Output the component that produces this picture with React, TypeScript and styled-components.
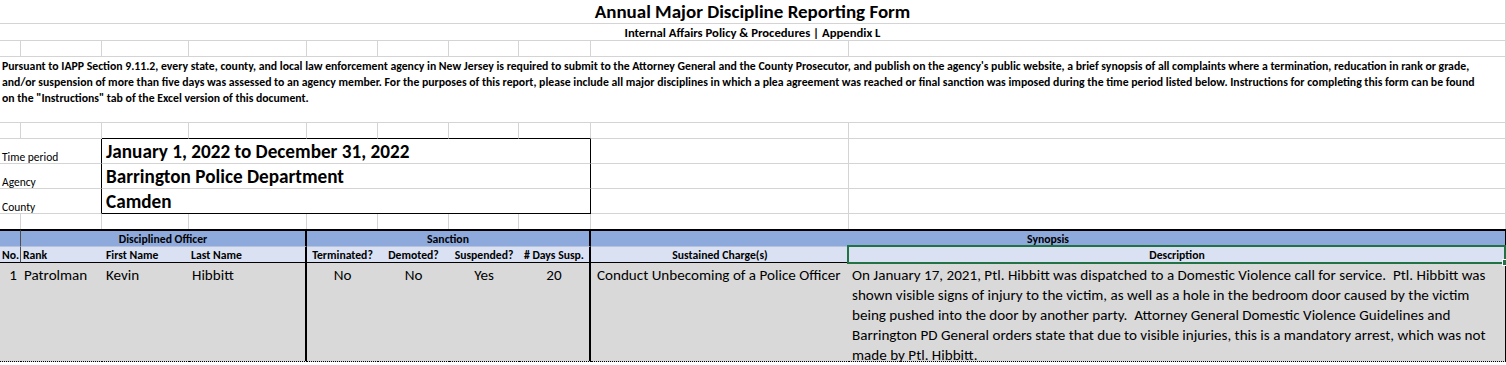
import React from 'react';
import styled, { createGlobalStyle, css } from 'styled-components';

const GRID = '#d4d4d4';
const HEAD_BLUE = '#8ea9db';
const HEAD_LIGHT = '#d9e1f2';
const ROW_GRAY = '#d9d9d9';
const FONT = `Carlito, Lato, 'Liberation Sans', sans-serif`;

const GlobalStyle = createGlobalStyle`
  html, body {
    margin: 0;
    padding: 0;
    background: #fff;
  }
  body {
    font-family: ${FONT};
    color: #000;
  }
`;

const Sheet = styled.div`
  display: grid;
  width: 1506px;
  grid-template-columns: 21px 81px 87px 118px 71px 71px 70px 72px 258px 657px;
  grid-template-rows: 24px 17px 16px 66px 16px 25px 25px 25px 15px 18px 16px 99px;
`;

const Cell = styled.div<{ $span?: number; $right?: string; $bottom?: string }>`
  box-sizing: border-box;
  grid-column: span ${({ $span }) => $span || 1};
  border-right: ${({ $right }) => $right || `1px solid ${GRID}`};
  border-bottom: ${({ $bottom }) => $bottom || `1px solid ${GRID}`};
  white-space: pre;
  overflow: visible;
  min-width: 0;
`;

const TitleCell = styled(Cell)`
  display: flex;
  align-items: flex-end;
  justify-content: center;
  font-size: 19px;
  font-weight: 700;
  line-height: 22px;
`;

const SubtitleCell = styled(Cell)`
  display: flex;
  align-items: flex-end;
  justify-content: center;
  font-size: 12.7px;
  font-weight: 700;
  line-height: 15px;
`;

const NoteCell = styled(Cell)`
  padding: 1px 0 0 2px;
  font-size: 11.75px;
  font-weight: 700;
  line-height: 16px;
`;

const Line = styled.span`
  display: block;
`;

const LabelCell = styled(Cell)`
  display: flex;
  align-items: flex-end;
  padding: 0 0 0 2px;
  font-size: 11.5px;
  line-height: 12px;
  border-right: 1px solid #000;
`;

const ValueCell = styled(Cell)<{ $last?: boolean }>`
  display: flex;
  align-items: flex-end;
  padding: 0 0 0 4px;
  font-size: 19.2px;
  font-weight: 700;
  line-height: 23px;
  border-right: 1px solid #000;
  ${({ $last }) => $last && css`border-bottom: 1px solid #000;`}
`;

const GroupHead = styled(Cell)`
  display: flex;
  align-items: center;
  justify-content: center;
  background: ${HEAD_BLUE};
  border-top: 2px solid #000;
  border-bottom: 1px solid #b7c3dc;
  font-size: 11.7px;
  font-weight: 700;
  line-height: 14px;
`;

const ColHead = styled(Cell)<{ $center?: boolean; $indent?: number }>`
  display: flex;
  align-items: center;
  justify-content: ${({ $center }) => ($center ? 'center' : 'flex-start')};
  padding-left: ${({ $center, $indent }) => ($center ? 0 : $indent ?? 2)}px;
  background: ${HEAD_LIGHT};
  border-bottom: 1px solid #000;
  font-size: 11.7px;
  font-weight: 700;
  line-height: 14px;
`;

const SelectedHead = styled(ColHead)`
  position: relative;
  &::after {
    content: '';
    position: absolute;
    left: -2px;
    top: -2px;
    right: -1px;
    bottom: -2px;
    border: 2px solid #217346;
    pointer-events: none;
  }
`;

const FillHandle = styled.span`
  position: absolute;
  right: -4px;
  bottom: -4px;
  width: 5px;
  height: 5px;
  background: #217346;
  border: 1px solid #fff;
  z-index: 2;
`;

const DataCell = styled(Cell)<{ $align?: 'left' | 'center' | 'right'; $indent?: number }>`
  background: ${ROW_GRAY};
  border-bottom: 1px dotted #000;
  padding-top: 2px;
  padding-right: ${({ $align }) => ($align === 'right' ? 4 : 0)}px;
  padding-left: ${({ $align, $indent }) => ($align === 'left' ? $indent ?? 3 : 0)}px;
  text-align: ${({ $align }) => $align || 'left'};
  font-size: 15.1px;
  line-height: 20px;
`;

const HEAVY = '2px solid #000';
const THIN = '1px solid #000';
const NO_COL = '1px solid #4d4d4d';

const note = [
  "Pursuant to IAPP Section 9.11.2, every state, county, and local law enforcement agency in New Jersey is required to submit to the Attorney General and the County Prosecutor, and publish on the agency's public website, a brief synopsis of all complaints where a termination, reducation in rank or grade,",
  'and/or suspension of more than five days was assessed to an agency member. For the purposes of this report, please include all major disciplines in which a plea agreement was reached or final sanction was imposed during the time period listed below. Instructions for completing this form can be found',
  'on the "Instructions" tab of the Excel version of this document.',
];

const info = [
  { label: 'Time period', value: 'January 1, 2022 to December 31, 2022' },
  { label: 'Agency', value: 'Barrington Police Department' },
  { label: 'County', value: 'Camden' },
];

const synopsis = [
  'On January 17, 2021, Ptl. Hibbitt was dispatched to a Domestic Violence call for service.  Ptl. Hibbitt was',
  'shown visible signs of injury to the victim, as well as a hole in the bedroom door caused by the victim',
  'being pushed into the door by another party.  Attorney General Domestic Violence Guidelines and',
  'Barrington PD General orders state that due to visible injuries, this is a mandatory arrest, which was not',
  'made by Ptl. Hibbitt.',
];

// blank row of 10 columns; boxTop gives the info box its black top edge
const BlankRow: React.FC<{ boxTop?: boolean; noBottom?: boolean }> = ({ boxTop, noBottom }) => (
  <>
    {Array.from({ length: 10 }).map((_, i) => {
      const inBox = boxTop && i >= 2 && i <= 7;
      return <Cell key={i} $bottom={inBox ? THIN : noBottom ? 'none' : undefined} />;
    })}
  </>
);

const App: React.FC = () => {
  return (
    <>
      <GlobalStyle />
      <Sheet>
        <TitleCell $span={10}>Annual Major Discipline Reporting Form</TitleCell>
        <SubtitleCell $span={10}>Internal Affairs Policy &amp; Procedures | Appendix L</SubtitleCell>
        <BlankRow />
        <NoteCell $span={10}>
          {note.map((l, i) => (
            <Line key={i}>{l}</Line>
          ))}
        </NoteCell>
        <BlankRow boxTop />

        {info.map((row, i) => (
          <React.Fragment key={row.label}>
            <LabelCell $span={2}>{row.label}</LabelCell>
            <ValueCell $span={6} $last={i === info.length - 1}>
              {row.value}
            </ValueCell>
            <Cell />
            <Cell />
          </React.Fragment>
        ))}

        <BlankRow noBottom />

        <GroupHead $right={NO_COL} />
        <GroupHead $span={3} $right={HEAVY}>Disciplined Officer</GroupHead>
        <GroupHead $span={4} $right={HEAVY}>Sanction</GroupHead>
        <GroupHead $span={2} $right={THIN}>Synopsis</GroupHead>

        <ColHead $right={NO_COL}>No.</ColHead>
        <ColHead $right="none">Rank</ColHead>
        <ColHead $right="none" $indent={4}>First Name</ColHead>
        <ColHead $right={HEAVY}>Last Name</ColHead>
        <ColHead $center $right="none">Terminated?</ColHead>
        <ColHead $center $right="none">Demoted?</ColHead>
        <ColHead $center $right="none">Suspended?</ColHead>
        <ColHead $center $right={HEAVY}># Days Susp.</ColHead>
        <ColHead $center $right="none">Sustained Charge(s)</ColHead>
        <SelectedHead $center $right={THIN}>
          Description
          <FillHandle />
        </SelectedHead>

        <DataCell $align="right" $right="none">1</DataCell>
        <DataCell $align="left" $right="none">Patrolman</DataCell>
        <DataCell $align="left" $right="none" $indent={4}>Kevin</DataCell>
        <DataCell $align="left" $right={HEAVY}>Hibbitt</DataCell>
        <DataCell $align="center" $right="none">No</DataCell>
        <DataCell $align="center" $right="none">No</DataCell>
        <DataCell $align="center" $right="none">Yes</DataCell>
        <DataCell $align="center" $right={HEAVY}>20</DataCell>
        <DataCell $align="left" $right="none" $indent={6}>
          Conduct Unbecoming of a Police Officer
        </DataCell>
        <DataCell $align="left" $right={THIN}>
          {synopsis.map((l, i) => (
            <Line key={i}>{l}</Line>
          ))}
        </DataCell>
      </Sheet>
    </>
  );
};

export default App;
